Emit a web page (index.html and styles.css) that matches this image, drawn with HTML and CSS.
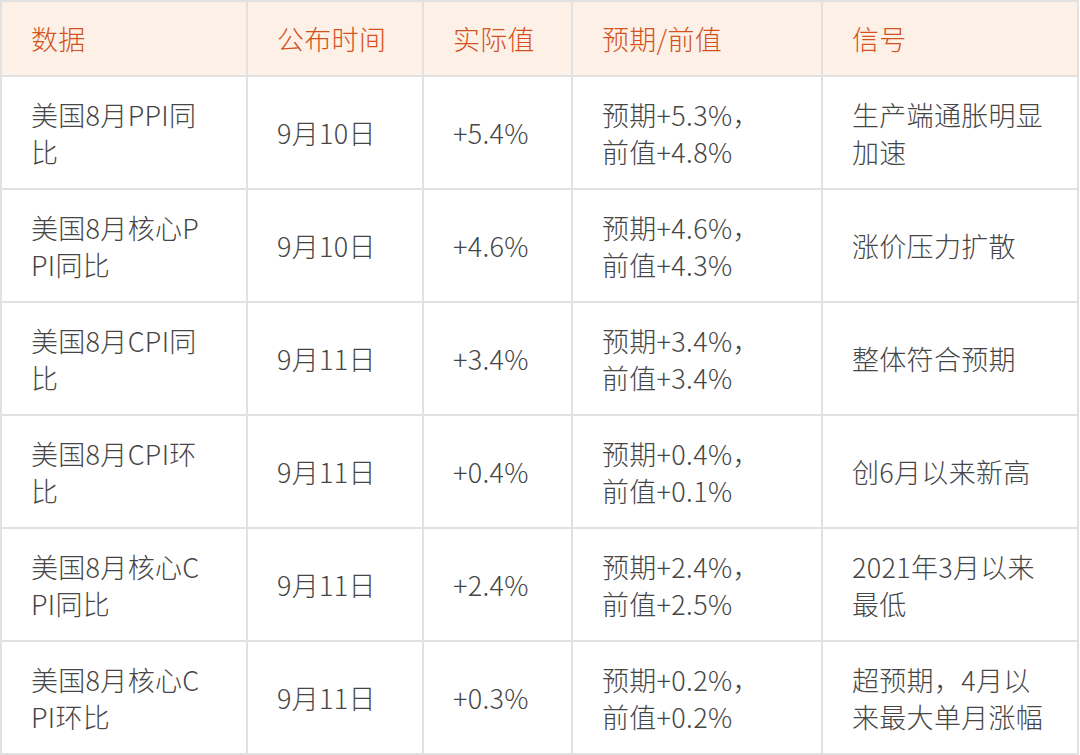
FILE: index.html
```html
<!DOCTYPE html>
<html lang="zh-CN">
<head>
<meta charset="utf-8">
<title>美国8月通胀数据</title>
<link rel="stylesheet" href="styles.css">
</head>
<body>
<table class="data-table">
  <colgroup>
    <col class="c-name">
    <col class="c-date">
    <col class="c-actual">
    <col class="c-expect">
    <col class="c-signal">
  </colgroup>
  <thead>
    <tr>
      <th>数据</th>
      <th>公布时间</th>
      <th>实际值</th>
      <th>预期/前值</th>
      <th>信号</th>
    </tr>
  </thead>
  <tbody>
    <tr>
      <td>美国8月PPI同<br>比</td>
      <td>9月10日</td>
      <td>+5.4%</td>
      <td>预期+5.3%，<br>前值+4.8%</td>
      <td>生产端通胀明显<br>加速</td>
    </tr>
    <tr>
      <td>美国8月核心P<br>PI同比</td>
      <td>9月10日</td>
      <td>+4.6%</td>
      <td>预期+4.6%，<br>前值+4.3%</td>
      <td>涨价压力扩散</td>
    </tr>
    <tr>
      <td>美国8月CPI同<br>比</td>
      <td>9月11日</td>
      <td>+3.4%</td>
      <td>预期+3.4%，<br>前值+3.4%</td>
      <td>整体符合预期</td>
    </tr>
    <tr>
      <td>美国8月CPI环<br>比</td>
      <td>9月11日</td>
      <td>+0.4%</td>
      <td>预期+0.4%，<br>前值+0.1%</td>
      <td>创6月以来新高</td>
    </tr>
    <tr>
      <td>美国8月核心C<br>PI同比</td>
      <td>9月11日</td>
      <td>+2.4%</td>
      <td>预期+2.4%，<br>前值+2.5%</td>
      <td>2021年3月以来<br>最低</td>
    </tr>
    <tr>
      <td>美国8月核心C<br>PI环比</td>
      <td>9月11日</td>
      <td>+0.3%</td>
      <td>预期+0.2%，<br>前值+0.2%</td>
      <td>超预期，4月以<br>来最大单月涨幅</td>
    </tr>
  </tbody>
</table>
</body>
</html>
```

FILE: styles.css
```css
html, body {
  margin: 0;
  padding: 0;
  background: #ffffff;
}

.data-table {
  border-collapse: collapse;
  table-layout: fixed;
  width: 1079px;
  font-family: "Noto Sans CJK SC", "Noto Sans", sans-serif;
  font-size: 27px;
  line-height: 37px;
  color: #464646;
  letter-spacing: 0.3px;
}

.c-name { width: 246px; }
.c-date { width: 176px; }
.c-actual { width: 149px; }
.c-expect { width: 250px; }
.c-signal { width: 256px; }

.data-table th,
.data-table td {
  border: 2px solid #e1e1e1;
  padding: 0 0 0 29px;
  text-align: left;
  vertical-align: middle;
  white-space: nowrap;
  font-weight: 300;
}

.data-table thead th {
  background: #fdf1e7;
  color: #d4511d;
  height: 73px;
}

.data-table tbody td {
  height: 111px;
}
```
